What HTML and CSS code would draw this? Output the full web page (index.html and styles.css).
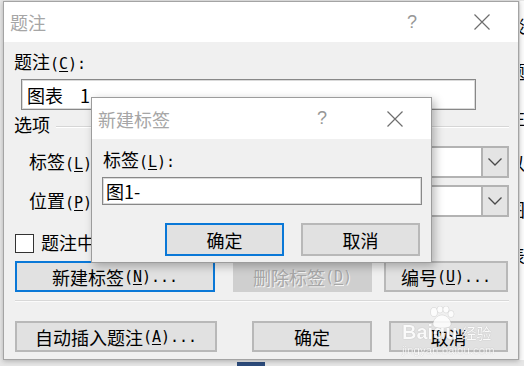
FILE: index.html
```html
<!DOCTYPE html>
<html lang="zh-CN">
<head>
    <meta charset="UTF-8">
    <title>题注</title>
    <link rel="stylesheet" href="styles.css">
</head>
<body>

<div class="screen">
    <div class="top">
        <div class="dialog">
            <div class="titlebar">
                <span class="title">题注</span>
                <span class="help">?</span>
                <svg class="close" width="16" height="16" viewBox="0 0 16 16"><path d="M0.5 0.5L15.5 15.5M15.5 0.5L0.5 15.5"/></svg>
            </div>
            <div class="dlg-body">
                <div class="label cap-label">题注<span class="k">(<u>C</u>):</span></div>
                <div class="textbox caption">图表<span class="num">1</span></div>
                <div class="group"><span class="label">选项</span><i class="rule"></i></div>
                <div class="row first">
                    <span class="label row-label">标签<span class="k">(<u>L</u>):</span></span>
                    <div class="combo"><div class="field"></div><div class="arrow"><svg width="14" height="8" viewBox="0 0 14 8"><path d="M0.5 0.5L7 7L13.5 0.5"/></svg></div></div>
                </div>
                <div class="row second">
                    <span class="label row-label">位置<span class="k">(<u>P</u>):</span></span>
                    <div class="combo"><div class="field"></div><div class="arrow"><svg width="14" height="8" viewBox="0 0 14 8"><path d="M0.5 0.5L7 7L13.5 0.5"/></svg></div></div>
                </div>
                <div class="check-row">
                    <span class="checkbox"></span>
                    <span class="label">题注中不包含标签<span class="k">(<u>E</u>)</span></span>
                </div>
                <div class="btn-row">
                    <div class="btn focus w-new">新建标签<span class="k">(<u>N</u>)...</span></div>
                    <div class="btn disabled w-del">删除标签<span class="k">(<u>D</u>)</span></div>
                    <div class="btn w-num">编号<span class="k">(<u>U</u>)...</span></div>
                </div>
                <div class="separator"></div>
                <div class="btn-row bottom">
                    <div class="btn w-auto">自动插入题注<span class="k">(<u>A</u>)...</span></div>
                    <div class="btn w-ok">确定</div>
                    <div class="btn w-cancel">取消</div>
                </div>
            </div>

            <!-- child dialog opened from 新建标签 -->
            <div class="dialog sub">
                <div class="titlebar">
                    <span class="title">新建标签</span>
                    <span class="help">?</span>
                    <svg class="close" width="16" height="16" viewBox="0 0 16 16"><path d="M0.5 0.5L15.5 15.5M15.5 0.5L0.5 15.5"/></svg>
                </div>
                <div class="dlg-body">
                    <div class="label">标签<span class="k">(<u>L</u>):</span></div>
                    <div class="textbox name">图1-</div>
                    <div class="sub-buttons">
                        <div class="btn focus">确定</div>
                        <div class="btn">取消</div>
                    </div>
                </div>
            </div>

            <div class="watermark">
                <div class="wm-top">
                    <span class="wm-logo">Baidu</span>
                    <svg class="paw" width="28" height="22" viewBox="0 0 28 22"><ellipse cx="6" cy="6" rx="3.5" ry="4.5"/><ellipse cx="12" cy="3.5" rx="3" ry="3.5"/><ellipse cx="18" cy="3.5" rx="3" ry="3.5"/><ellipse cx="23" cy="8" rx="3" ry="3.5"/><path d="M14 9c-5 0-9 5-9 9c0 3 3 4 9 4s9-1 9-4c0-4-4-9-9-9z"/></svg>
                    <span class="wm-cn">经验</span>
                </div>
                <div class="wm-url">jingyan.baidu.com</div>
            </div>
        </div>
        <div class="doc-edge">
            <p>谈</p>
            <p>题</p>
            <p>注</p>
            <p>以</p>
            <p>图</p>
            <p>表</p>
        </div>
    </div>
    <div class="bottom-strip"><i class="task"></i></div>
</div>

</body>
</html>
```

FILE: styles.css
```css
* {
    box-sizing: border-box;
}
body {
    margin: 0;
    width: 524px;
    height: 366px;
    overflow: hidden;
    background-color: #e8e8e8;
    font-family: "Noto Sans CJK SC", sans-serif;
    font-size: 18px;
    color: #000;
}
u {
    text-decoration-thickness: 1px;
    text-underline-offset: 2px;
}
.k {
    font-family: "DejaVu Sans Mono", monospace;
    font-size: 15px;
}
.screen {
    display: flex;
    flex-direction: column;
    height: 366px;
}
.top {
    display: flex;
    height: 360px;
    padding: 1px 0 0 3px;
}
.dialog {
    position: relative;
    width: 516px;
    height: 359px;
    border: 1px solid #a4a4a4;
    background-color: #f0f0f0;
    box-shadow: 0 1px 5px rgba(0, 0, 0, 0.25);
}
.titlebar {
    display: flex;
    align-items: center;
    height: 40px;
    padding-left: 6px;
    background-color: #fff;
}
.title {
    color: #a6a6a6;
    line-height: 24px;
}
.help {
    margin-left: auto;
    color: #979797;
    font-family: "Liberation Sans", sans-serif;
    font-size: 18px;
}
.close {
    margin-left: 57px;
    margin-right: 28px;
    fill: none;
    stroke: #6e6e6e;
    stroke-width: 1.2;
}
.dlg-body {
    padding: 7px 9px 0 11px;
}
.label {
    line-height: 24px;
    white-space: nowrap;
}
.cap-label {
    margin-left: -1px;
}
.textbox {
    display: flex;
    align-items: center;
    background-color: #fff;
    border: 1px solid #888;
    box-shadow: inset 0 0 0 1px #dadada;
    white-space: nowrap;
}
.caption {
    margin: 3px 0 0 6px;
    width: 455px;
    height: 31px;
    padding-left: 5px;
}
.num {
    margin-left: 17px;
}
.group {
    display: flex;
    align-items: center;
    margin: 2px 0 0 -1px;
    height: 24px;
}
.rule {
    flex: 1;
    margin: 6px 0 0 6px;
    border-top: 1px solid #d6d6d6;
    border-bottom: 1px solid #fff;
}
.row {
    display: flex;
    align-items: center;
    height: 32px;
}
.row.first {
    margin-top: 10px;
}
.row.second {
    margin-top: 7px;
}
.row-label {
    margin-left: 14px;
    width: 92px;
}
.combo {
    flex: 1;
    display: flex;
    height: 32px;
    border: 2px solid #b3b3b3;
}
.field {
    flex: 1;
    background-color: #fff;
}
.arrow {
    display: flex;
    align-items: center;
    justify-content: center;
    width: 26px;
    background-color: #e4e4e4;
    border-left: 2px solid #b3b3b3;
}
.arrow svg {
    fill: none;
    stroke: #4a4a4a;
    stroke-width: 1.3;
}
.check-row {
    display: flex;
    align-items: center;
    height: 24px;
    margin-top: 14px;
}
.checkbox {
    width: 19px;
    height: 19px;
    border: 1px solid #333;
    background-color: #fff;
}
.check-row .label {
    margin-left: 7px;
}
.btn-row {
    display: flex;
    height: 31px;
    margin-top: 6px;
}
.btn-row.bottom {
    margin-top: 19px;
}
.btn {
    display: flex;
    align-items: center;
    justify-content: center;
    height: 100%;
    background-color: #e1e1e1;
    border: 2px solid #b8b8b8;
    white-space: nowrap;
}
.btn.focus {
    border-color: #0a78d7;
}
.btn.disabled {
    background-color: #cfcfcf;
    border-color: #cfcfcf;
    color: #a7a7a7;
    text-shadow: 1px 1px 0 #f4f4f4;
}
.w-new { width: 200px; }
.w-del { width: 139px; margin-left: 18px; }
.w-num { width: 124px; margin-left: 12px; }
.w-auto { width: 202px; }
.w-ok { width: 120px; margin-left: 35px; }
.w-cancel { width: 119px; margin-left: 17px; }
.separator {
    margin-top: 8px;
    border-top: 1px solid #d8d8d8;
    border-bottom: 1px solid #fbfbfb;
}

/* child dialog */
.dialog.sub {
    position: absolute;
    left: 87px;
    top: 95px;
    width: 341px;
    height: 166px;
    border-color: #9c9c9c;
    box-shadow: 3px 3px 9px rgba(0, 0, 0, 0.28);
}
.sub .titlebar {
    height: 41px;
}
.sub .close {
    margin-left: 60px;
}
.sub .dlg-body {
    padding: 8px 11px 0 11px;
}
.name {
    margin: 3px 0 0 -1px;
    width: 320px;
    height: 28px;
    padding-left: 3px;
}
.sub-buttons {
    display: flex;
    justify-content: flex-end;
    gap: 17px;
    height: 33px;
    margin-top: 18px;
}
.sub-buttons .btn {
    width: 119px;
}

/* site watermark over the screenshot */
.watermark {
    position: absolute;
    left: 398px;
    top: 306px;
    color: #fff;
    opacity: 0.85;
    text-shadow: 0 0 1px rgba(0, 0, 0, 0.35);
}
.wm-top {
    display: flex;
    align-items: flex-end;
    height: 34px;
}
.wm-logo {
    font-family: "Liberation Sans", sans-serif;
    font-weight: bold;
    font-size: 20px;
    line-height: 20px;
}
.paw {
    margin: 0 0 14px -30px;
    fill: #fff;
    stroke: rgba(0, 0, 0, 0.2);
    stroke-width: 0.5;
}
.wm-cn {
    margin-left: 6px;
    font-size: 15px;
    line-height: 18px;
}
.wm-url {
    margin-top: 2px;
    font-family: "Liberation Sans", sans-serif;
    font-size: 11.5px;
    line-height: 12px;
}

.doc-edge {
    flex: 1;
    overflow: hidden;
    margin-left: 1px;
    background-color: #fbfbfb;
}
.doc-edge p {
    margin: 14px 0 26px -13px;
    line-height: 20px;
}
.bottom-strip {
    height: 6px;
    background-color: #e6e6e6;
}
.task {
    display: block;
    margin: 2px 0 0 237px;
    width: 28px;
    height: 4px;
    background-color: #2d4c7c;
}
```
